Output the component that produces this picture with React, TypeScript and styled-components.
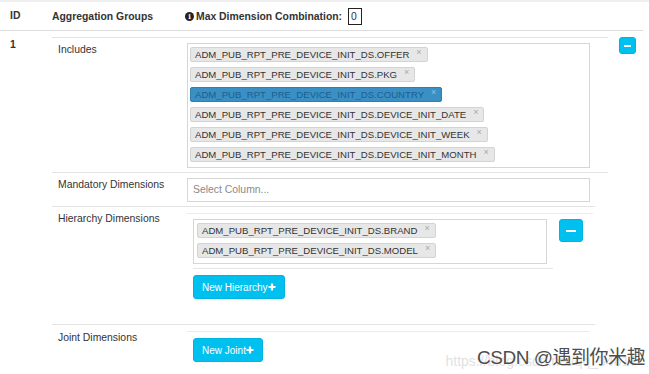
import React from 'react';
import styled, { createGlobalStyle } from 'styled-components';

const Global = createGlobalStyle`
  html, body { margin: 0; padding: 0; background: #fff; }
  body { font-family: "Liberation Sans", Arial, sans-serif; color: #333; }
  * { box-sizing: border-box; }
`;

const Page = styled.div`
  position: relative;
  width: 649px;
  height: 374px;
  overflow: hidden;
  border-top: 2px solid #f0f0f0;
`;

const HeaderRow = styled.div`
  display: flex;
  align-items: center;
  width: 643px;
  height: 29px;
  border-bottom: 1px solid #dcdcdc;
  font-size: 10.4px;
  font-weight: bold;
`;

const IdCell = styled.div<{ $top?: number }>`
  width: 52px;
  padding-left: 10px;
  padding-top: ${(p) => p.$top ?? 0}px;
  font-size: 10.4px;
  font-weight: bold;
  line-height: 12px;
  flex: none;
`;

const GroupTitle = styled.div`
  width: 133px;
  flex: none;
`;

const MaxCell = styled.div`
  display: flex;
  align-items: center;
`;

const InfoIcon = styled.span`
  display: inline-flex;
  align-items: center;
  justify-content: center;
  width: 9px;
  height: 9px;
  border-radius: 50%;
  background: #222;
  color: #fff;
  font-family: "DejaVu Serif", serif;
  font-size: 7px;
  font-weight: bold;
  margin-right: 2px;
`;

const MaxInput = styled.span`
  display: inline-block;
  width: 14px;
  height: 17px;
  margin-left: 6px;
  border: 1px solid #222;
  padding-left: 2px;
  font-weight: normal;
  font-size: 10.4px;
  line-height: 15px;
`;

const BodyRow = styled.div`
  display: flex;
  align-items: flex-start;
`;

const Content = styled.div`
  padding-top: 6px;
  flex: none;
`;

const ActionCol = styled.div`
  padding-top: 6px;
  margin-left: 11px;
`;

const MinusButton = styled.button<{ $w: number; $h: number }>`
  display: flex;
  align-items: center;
  justify-content: center;
  width: ${(p) => p.$w}px;
  height: ${(p) => p.$h}px;
  padding: 0;
  border: 1px solid #00b4e2;
  border-radius: 3px;
  background: #00c0ef;
  flex: none;
  &::before {
    content: '';
    display: block;
    width: ${(p) => Math.round(p.$w * 0.42)}px;
    height: 2px;
    background: #fff;
  }
`;

const FieldRow = styled.div<{ $w: number; $topBorder?: boolean }>`
  display: grid;
  grid-template-columns: 135px 1fr;
  width: ${(p) => p.$w}px;
  border-top: ${(p) => (p.$topBorder ? '1px solid #e3e3e3' : 'none')};
  border-bottom: 1px solid #e3e3e3;
`;

const Label = styled.div<{ $top: number }>`
  padding-left: 6px;
  padding-top: ${(p) => p.$top}px;
  font-size: 10.4px;
  line-height: 12px;
  color: #333;
`;

const Value = styled.div<{ $top: number; $bottom: number }>`
  padding-top: ${(p) => p.$top}px;
  padding-bottom: ${(p) => p.$bottom}px;
`;

const TagBox = styled.div<{ $w: number; $pad: string }>`
  display: flex;
  flex-wrap: wrap;
  align-items: flex-start;
  width: ${(p) => p.$w}px;
  padding: ${(p) => p.$pad};
  border: 1px solid #d6d6d6;
  background: #fff;
`;

const Tag = styled.span<{ $active?: boolean }>`
  display: inline-flex;
  align-items: flex-start;
  height: 15px;
  margin: 0 4px 5px 0;
  padding: 0 5px 0 4px;
  border: 1px solid ${(p) => (p.$active ? '#2f7fb1' : '#d3d3d3')};
  border-radius: 2px;
  background: ${(p) => (p.$active ? '#3a8fc5' : '#e7e7e7')};
  color: ${(p) => (p.$active ? '#1d5f8e' : '#333')};
  font-size: 9.6px;
  line-height: 13px;
  white-space: nowrap;
`;

const TagClose = styled.span<{ $active?: boolean }>`
  margin-left: 7px;
  font-size: 9px;
  line-height: 8px;
  color: ${(p) => (p.$active ? '#8ec0e2' : '#a8a8a8')};
`;

const SelectInput = styled.div`
  width: 403px;
  height: 24px;
  border: 1px solid #d6d6d6;
  padding-left: 5px;
  font-size: 10.4px;
  line-height: 22px;
  color: #8a8a8a;
`;

const Nested = styled.div<{ $w: number }>`
  width: ${(p) => p.$w}px;
  border-top: 1px solid #ececec;
  padding: 5px 0 0 6px;
`;

const HierLine = styled.div`
  display: flex;
  align-items: flex-start;
`;

const HierGroup = styled.div`
  width: 360px;
  padding-bottom: 4px;
  border-bottom: 1px solid #e6e6e6;
`;

const InfoButton = styled.button<{ $top: number }>`
  display: inline-flex;
  align-items: center;
  height: 24px;
  margin-top: ${(p) => p.$top}px;
  padding: 0 8px;
  border: 1px solid #00b4e2;
  border-radius: 3px;
  background: #00c0ef;
  color: #fff;
  font-family: "Liberation Sans", Arial, sans-serif;
  font-size: 10px;
  white-space: nowrap;
`;

const Watermark = styled.div`
  position: absolute;
  right: 4px;
  bottom: 5px;
  display: flex;
  align-items: baseline;
  white-space: nowrap;
`;

const WatermarkUrl = styled.span`
  position: absolute;
  right: 8px;
  bottom: 0;
  font-size: 14px;
  color: #e2e2e2;
`;

const WatermarkText = styled.span`
  position: relative;
  font-family: "Liberation Sans", "Noto Sans CJK SC", sans-serif;
  font-size: 19px;
  color: #4d4d4d;
  letter-spacing: -0.5px;
  text-shadow: 0 0 1px #fff;
`;

const Plus = () => (
  <svg width="8" height="8" viewBox="0 0 8 8">
    <path d="M4 0.5V7.5M0.5 4H7.5" stroke="#fff" strokeWidth="2.2" />
  </svg>
);

const includes = [
  'ADM_PUB_RPT_PRE_DEVICE_INIT_DS.OFFER',
  'ADM_PUB_RPT_PRE_DEVICE_INIT_DS.PKG',
  'ADM_PUB_RPT_PRE_DEVICE_INIT_DS.COUNTRY',
  'ADM_PUB_RPT_PRE_DEVICE_INIT_DS.DEVICE_INIT_DATE',
  'ADM_PUB_RPT_PRE_DEVICE_INIT_DS.DEVICE_INIT_WEEK',
  'ADM_PUB_RPT_PRE_DEVICE_INIT_DS.DEVICE_INIT_MONTH',
];

const hierarchy = [
  'ADM_PUB_RPT_PRE_DEVICE_INIT_DS.BRAND',
  'ADM_PUB_RPT_PRE_DEVICE_INIT_DS.MODEL',
];

export default function App() {
  return (
    <>
      <Global />
      <Page>
        <HeaderRow>
          <IdCell>ID</IdCell>
          <GroupTitle>Aggregation Groups</GroupTitle>
          <MaxCell>
            <InfoIcon>i</InfoIcon>
            Max Dimension Combination:
            <MaxInput>0</MaxInput>
          </MaxCell>
        </HeaderRow>
        <BodyRow>
          <IdCell $top={8}>1</IdCell>
          <Content>
            <FieldRow $w={556} $topBorder>
              <Label $top={6}>Includes</Label>
              <Value $top={5} $bottom={4}>
                <TagBox $w={403} $pad="3px 2px 0">
                  {includes.map((t, i) => (
                    <Tag key={t} $active={i === 2}>
                      {t}
                      <TagClose $active={i === 2}>×</TagClose>
                    </Tag>
                  ))}
                </TagBox>
              </Value>
            </FieldRow>
            <FieldRow $w={543}>
              <Label $top={6}>Mandatory Dimensions</Label>
              <Value $top={5} $bottom={4}>
                <SelectInput>Select Column...</SelectInput>
              </Value>
            </FieldRow>
            <FieldRow $w={543}>
              <Label $top={6}>Hierarchy Dimensions</Label>
              <Value $top={6} $bottom={25}>
                <Nested $w={406}>
                  <HierLine>
                    <HierGroup>
                      <TagBox $w={354} $pad="3px 3px 0">
                        {hierarchy.map((t) => (
                          <Tag key={t}>
                            {t}
                            <TagClose>×</TagClose>
                          </Tag>
                        ))}
                      </TagBox>
                    </HierGroup>
                    <MinusButton $w={24} $h={23} style={{ marginLeft: 6 }} />
                  </HierLine>
                  <InfoButton $top={6}>
                    New Hierarchy
                    <Plus />
                  </InfoButton>
                </Nested>
              </Value>
            </FieldRow>
            <FieldRow $w={543} style={{ borderBottom: 'none' }}>
              <Label $top={7}>Joint Dimensions</Label>
              <Value $top={6} $bottom={20}>
                <Nested $w={403}>
                  <InfoButton $top={1}>
                    New Joint
                    <Plus />
                  </InfoButton>
                </Nested>
              </Value>
            </FieldRow>
          </Content>
          <ActionCol>
            <MinusButton $w={17} $h={17} />
          </ActionCol>
        </BodyRow>
        <Watermark>
          <WatermarkUrl>https://blog.csdn.net/qq_34617</WatermarkUrl>
          <WatermarkText>CSDN @遇到你米趣</WatermarkText>
        </Watermark>
      </Page>
    </>
  );
}
